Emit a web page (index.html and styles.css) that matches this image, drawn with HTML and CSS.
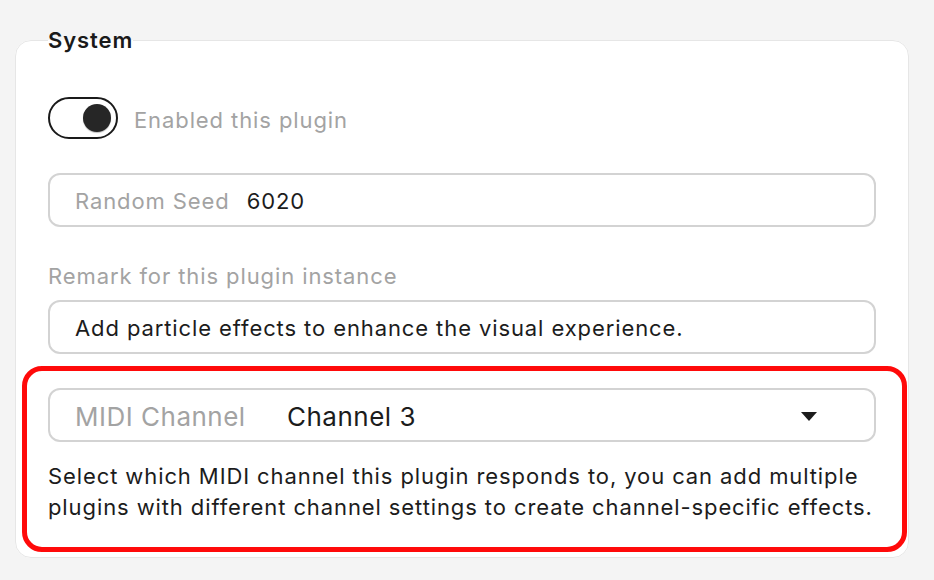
FILE: index.html
```html
<!DOCTYPE html>
<html lang="en">
<head>
<meta charset="utf-8">
<title>System settings</title>
<link rel="stylesheet" href="styles.css">
</head>
<body>
<fieldset class="card">
  <legend class="card-title">System</legend>

  <label class="toggle-row">
    <span class="toggle"><span class="knob"></span></span>
    <span class="toggle-label">Enabled this plugin</span>
  </label>

  <div class="field">
    <span class="field-label">Random Seed</span>
    <span class="field-value">6020</span>
  </div>

  <div class="stack">
    <div class="caption">Remark for this plugin instance</div>
    <div class="field">
      <span class="field-value">Add particle effects to enhance the visual experience.</span>
    </div>
  </div>

  <section class="highlight">
    <div class="field select">
      <span class="field-label midi-label">MIDI Channel</span>
      <span class="select-value">Channel 3</span>
      <span class="caret"></span>
    </div>
    <p class="help">Select which MIDI channel this plugin responds to, you can add multiple plugins with different channel settings to create channel-specific effects.</p>
  </section>
</fieldset>
</body>
</html>
```

FILE: styles.css
```css
* { box-sizing: border-box; }

html, body {
  margin: 0;
  padding: 0;
  background: #f4f4f4;
  font-family: Inter, "Noto Sans", "Liberation Sans", sans-serif;
  color: #1c1c1c;
}

body {
  padding: 0 25px 0 15px;
}

.card {
  margin: 26px 0 0 0;
  padding: 43px 32px 0 32px;
  height: 532px;
  background: #ffffff;
  border: 1.5px solid #e6e6e6;
  border-radius: 16px;
  min-width: 0;
}

.card-title {
  padding: 0;
  margin-left: 0;
  font-size: 22px;
  font-weight: 600;
  letter-spacing: 0.9px;
  line-height: 28px;
  color: #1a1a1a;
}

.toggle-row {
  display: flex;
  align-items: center;
  gap: 16px;
  height: 42px;
}

.toggle {
  width: 70px;
  height: 42px;
  border: 2.5px solid #1a1a1a;
  border-radius: 21px;
  display: flex;
  align-items: center;
  justify-content: flex-end;
  padding-right: 5px;
}

.knob {
  width: 28px;
  height: 28px;
  border-radius: 50%;
  background: #262626;
  box-shadow: 0 1px 1px rgba(0,0,0,0.25);
}

.toggle-label {
  font-size: 22px;
  letter-spacing: 0.9px;
  color: #a3a3a3;
  padding-top: 4px;
}

.field {
  margin-top: 34px;
  height: 54px;
  border: 2px solid #d3d3d3;
  border-radius: 12px;
  display: flex;
  align-items: center;
  padding: 2px 25px 0 25px;
  font-size: 22px;
  letter-spacing: 0.9px;
}

.field-label {
  color: #a3a3a3;
  margin-right: 17px;
}

.field-value {
  color: #1c1c1c;
}

.stack {
  margin-top: 35px;
}

.caption {
  font-size: 22px;
  letter-spacing: 0.9px;
  color: #a3a3a3;
  line-height: 28px;
  margin-bottom: 10px;
}

.stack .field {
  margin-top: 0;
}

.highlight {
  position: relative;
  margin-top: 34px;
}

.highlight::after {
  content: "";
  position: absolute;
  left: -26px;
  right: -31px;
  top: -22px;
  bottom: -29px;
  border: 5px solid #ff0a0a;
  border-radius: 20px;
  pointer-events: none;
}

.select {
  margin-top: 0;
  font-size: 26px;
  letter-spacing: 0.5px;
}

.midi-label {
  width: 212px;
  margin-right: 0;
  flex: none;
}

.select-value {
  flex: 1;
}

.caret {
  width: 0;
  height: 0;
  border-left: 8px solid transparent;
  border-right: 8px solid transparent;
  border-top: 9px solid #1c1c1c;
  margin-right: 32px;
}

.help {
  margin: 19px 0 0 0;
  font-size: 22px;
  letter-spacing: 0.9px;
  line-height: 31px;
  color: #1c1c1c;
}
```
